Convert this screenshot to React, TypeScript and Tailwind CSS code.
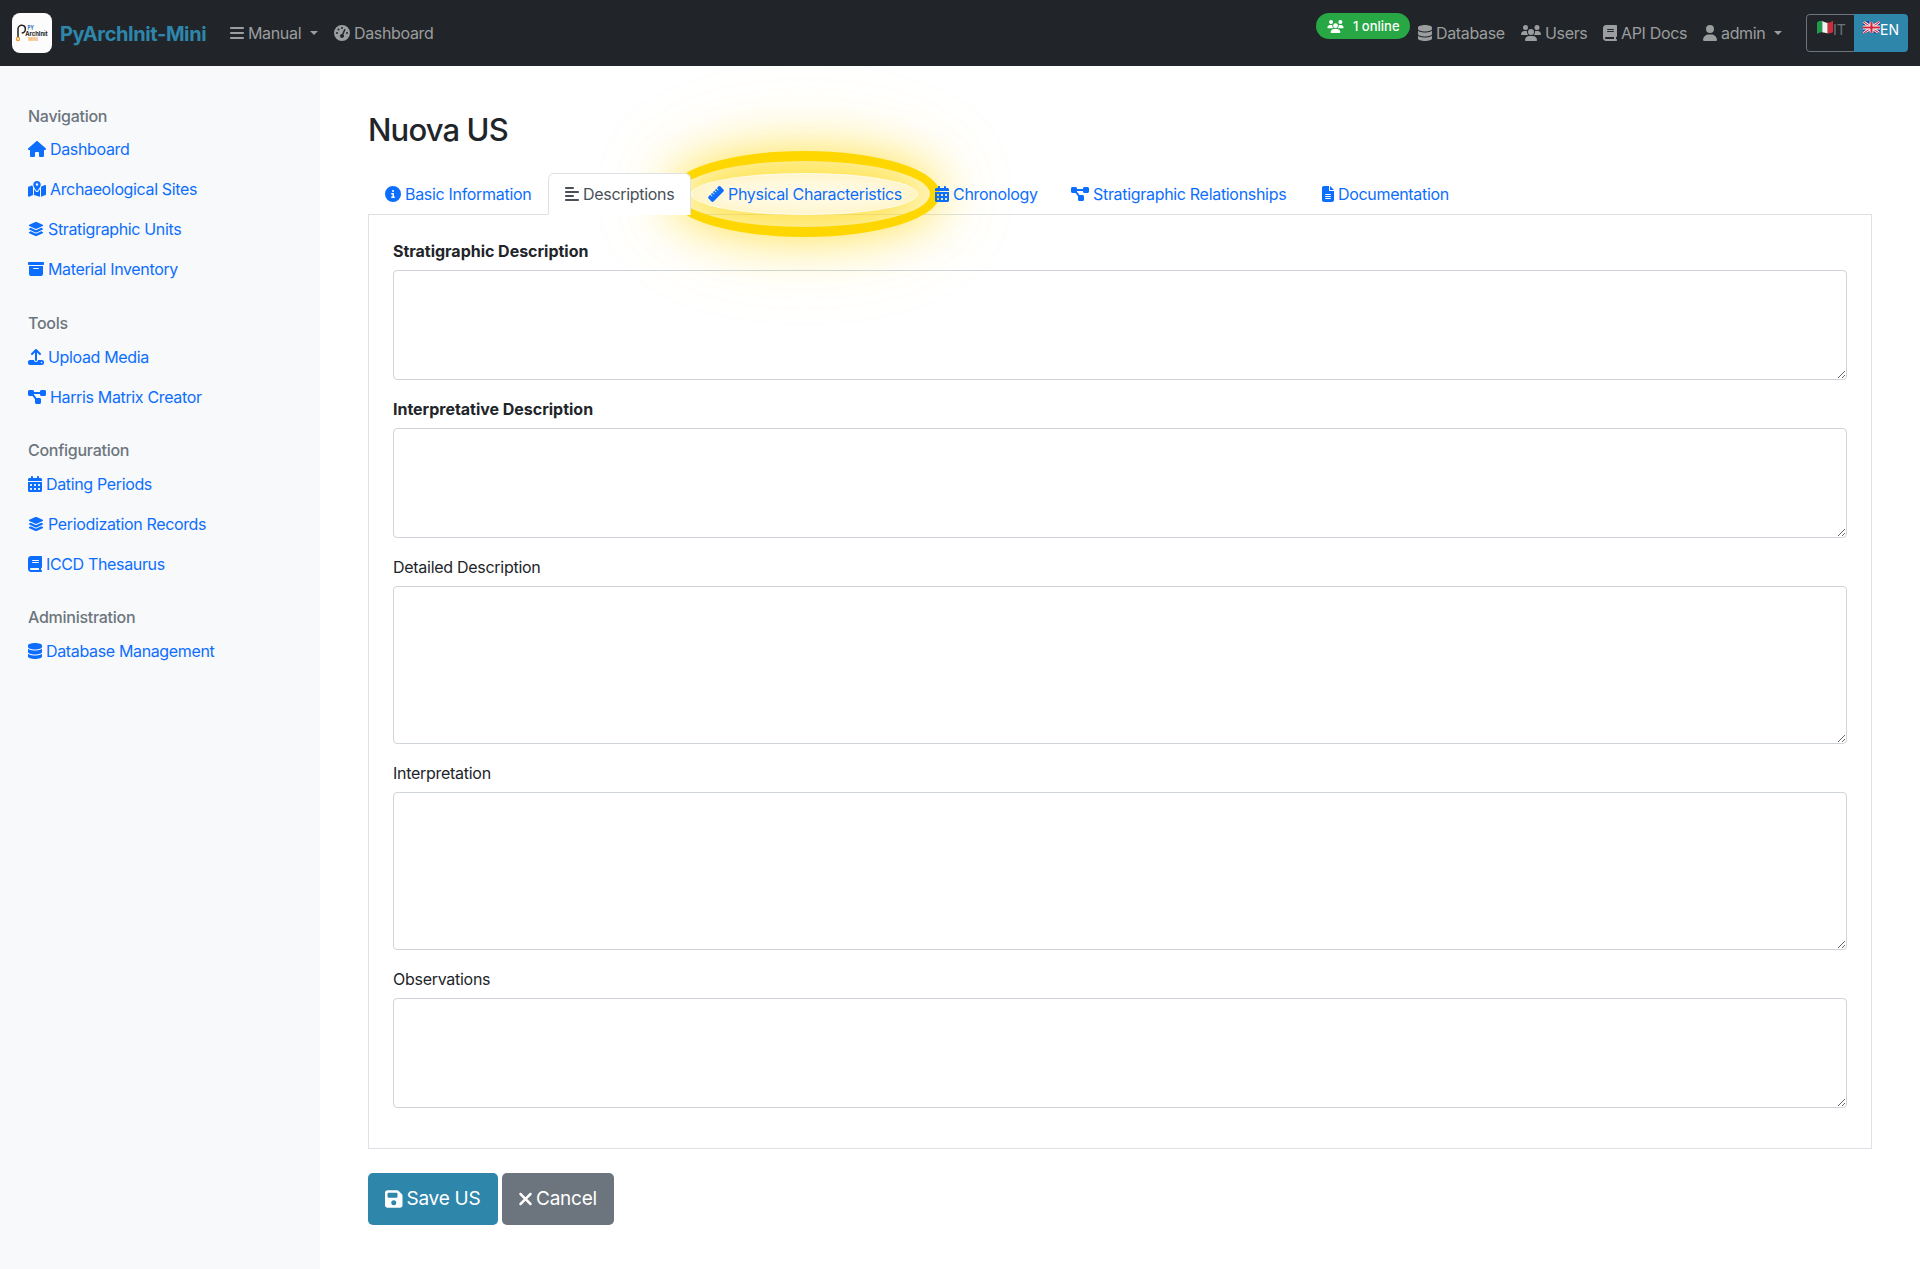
import React from "react";
import {
  FaAlignLeft,
  FaBars,
  FaBook,
  FaBoxArchive,
  FaCalendarDays,
  FaCircleInfo,
  FaDatabase,
  FaDiagramProject,
  FaFileLines,
  FaFloppyDisk,
  FaGaugeHigh,
  FaHouse,
  FaLayerGroup,
  FaMapLocationDot,
  FaRuler,
  FaUpload,
  FaUser,
  FaUsers,
  FaXmark,
} from "react-icons/fa6";

type Icon = React.ComponentType<{ className?: string }>;
type Link = { label: string; icon: Icon; size: string };

const W20 = "w-5 h-4";
const W18 = "w-[18px] h-4";
const W16 = "w-4 h-4";
const W14 = "w-3.5 h-4";
const W12 = "w-3 h-4";

const groups: { title: string; links: Link[] }[] = [
  {
    title: "Navigation",
    links: [
      { label: "Dashboard", icon: FaHouse, size: W18 },
      { label: "Archaeological Sites", icon: FaMapLocationDot, size: W18 },
      { label: "Stratigraphic Units", icon: FaLayerGroup, size: W16 },
      { label: "Material Inventory", icon: FaBoxArchive, size: W16 },
    ],
  },
  {
    title: "Tools",
    links: [
      { label: "Upload Media", icon: FaUpload, size: W16 },
      { label: "Harris Matrix Creator", icon: FaDiagramProject, size: W18 },
    ],
  },
  {
    title: "Configuration",
    links: [
      { label: "Dating Periods", icon: FaCalendarDays, size: W14 },
      { label: "Periodization Records", icon: FaLayerGroup, size: W16 },
      { label: "ICCD Thesaurus", icon: FaBook, size: W14 },
    ],
  },
  {
    title: "Administration",
    links: [{ label: "Database Management", icon: FaDatabase, size: W14 }],
  },
];

type Tab = Link & { width: string; state?: "active" | "highlight" };

const tabs: Tab[] = [
  { label: "Basic Information", icon: FaCircleInfo, size: W16, width: "w-[180px]" },
  { label: "Descriptions", icon: FaAlignLeft, size: W14, width: "w-[143px]", state: "active" },
  { label: "Physical Characteristics", icon: FaRuler, size: W16, width: "w-[227px]", state: "highlight" },
  { label: "Chronology", icon: FaCalendarDays, size: W14, width: "w-[136px]" },
  { label: "Stratigraphic Relationships", icon: FaDiagramProject, size: W18, width: "w-[251px]" },
  { label: "Documentation", icon: FaFileLines, size: W12, width: "w-[161px]" },
];

const fields = [
  { label: "Stratigraphic Description", bold: true, height: "h-[110px]" },
  { label: "Interpretative Description", bold: true, height: "h-[110px]" },
  { label: "Detailed Description", bold: false, height: "h-[158px]" },
  { label: "Interpretation", bold: false, height: "h-[158px]" },
  { label: "Observations", bold: false, height: "h-[110px]" },
];

function Logo() {
  return (
    <svg viewBox="0 0 40 40" className="h-10 w-10 shrink-0 rounded-lg bg-[#fcfcfc]">
      <path d="M6 24.300V15.800a3.700 3.900 0 1 1 3.700 4.300" fill="none" stroke="#222" strokeWidth="1.500" />
      <circle cx="6" cy="26" r="1.600" fill="#fff" stroke="#f0962e" strokeWidth="1.200" />
      <text x="15.600" y="17" fontSize="5.600" fontWeight="700" fill="#2f6fb5" textLength="6.200" lengthAdjust="spacingAndGlyphs" letterSpacing="0" fontFamily="Inter, sans-serif">PY</text>
      <text x="13.200" y="23.100" fontSize="5.800" fontWeight="700" fill="#222" textLength="22.500" lengthAdjust="spacingAndGlyphs" letterSpacing="0" fontFamily="Inter, sans-serif">ArchInit</text>
      <text x="16.200" y="28" fontSize="4.400" fontWeight="600" fill="#f5a04a" textLength="10" lengthAdjust="spacingAndGlyphs" letterSpacing="0" fontFamily="Inter, sans-serif">MINI</text>
    </svg>
  );
}

const wave = "M1 3.2C4 1.2 6 2 9 3S14 3.6 17 1.8V12.2C14 14 12 13.6 9 12.8S4 12 1 14Z";

function FlagIT() {
  return (
    <svg viewBox="1 1 16 13" preserveAspectRatio="none" className="h-[14px] w-4">
      <clipPath id="flag-it"><path d={wave} /></clipPath>
      <g clipPath="url(#flag-it)">
        <path d="M0 0h6.3v16H0z" fill="#1f9a4c" />
        <path d="M6.3 0h5.4v16H6.3z" fill="#f1f1f1" />
        <path d="M11.700 0H18v16h-6.300z" fill="#cf2c3b" />
      </g>
    </svg>
  );
}

function FlagGB() {
  return (
    <svg viewBox="1 1 16 13" preserveAspectRatio="none" className="h-[14px] w-[17px]">
      <clipPath id="flag-gb"><path d={wave} /></clipPath>
      <g clipPath="url(#flag-gb)">
        <path d="M0 0h18v16H0z" fill="#1d3f8f" />
        <path d="M0 1.500 18 14.500M18 1.500 0 14.500" stroke="#fff" strokeWidth="2.600" />
        <path d="M0 1.500 18 14.500M18 1.500 0 14.500" stroke="#d3243a" strokeWidth="1" />
        <path d="M9 0v16M0 8h18" stroke="#fff" strokeWidth="3.600" />
        <path d="M9 0v16M0 8h18" stroke="#d3243a" strokeWidth="2" />
      </g>
    </svg>
  );
}

function Caret() {
  return <span className="ml-[5px] border-x-[4.800px] border-t-[4.800px] border-x-transparent border-t-current" />;
}

function NavItem({ icon: I, size, label, width, caret }: Link & { width: string; caret?: boolean }) {
  return (
    <a className={`flex shrink-0 items-center gap-1 tracking-[-0.34px] text-[#9b9d9e] ${width}`}>
      <I className={`shrink-0 ${size}`} />
      <span className="whitespace-nowrap">{label}</span>
      {caret && <Caret />}
    </a>
  );
}

function Navbar() {
  return (
    <header className="flex h-[66px] items-center bg-[#212529] px-3">
      <Logo />
      <span className="ml-2 w-[170px] pt-px text-xl font-bold tracking-[-0.4px] text-[#2e86ab]">PyArchInit-Mini</span>
      <NavItem icon={FaBars} size={W14} label="Manual" width="w-[104px]" caret />
      <NavItem icon={FaGaugeHigh} size={W16} label="Dashboard" width="w-[110px]" />
      <div className="ml-auto flex items-center">
        <span className="mr-2 mb-3.5 flex h-[26px] w-[94px] items-center rounded-full bg-[#28a745] pt-px pl-[11px] text-[13px] font-medium text-white">
          <FaUsers className="mr-[9px] h-[13px] w-[17px]" />
          <span className="whitespace-nowrap">1 online</span>
        </span>
        <NavItem icon={FaDatabase} size={W14} label="Database" width="w-[103px]" />
        <NavItem icon={FaUsers} size={W20} label="Users" width="w-[82px]" />
        <NavItem icon={FaBook} size={W14} label="API Docs" width="w-[100px]" />
        <NavItem icon={FaUser} size={W14} label="admin" width="w-[103px]" caret />
        <div className="flex h-[38px] w-[102px] overflow-hidden rounded text-sm leading-[21px]">
          <span className="flex w-12 items-start rounded-l border border-r-0 border-[#6c757d] pt-[5px] pl-2.5 text-[#6c757d]">
            <FlagIT />
            <span className="-mt-px">IT</span>
          </span>
          <span className="flex flex-1 items-start bg-[#2e86ab] pt-1.5 pl-[9px] text-white">
            <FlagGB />
            <span className="-mt-px">EN</span>
          </span>
        </div>
      </div>
    </header>
  );
}

function Sidebar() {
  return (
    <aside className="w-80 shrink-0 bg-[#f8f9fb] pt-[17px] pl-7">
      {groups.map((g, i) => (
        <section key={g.title} className={i ? "pt-6" : "pt-6 pb-px"}>
          <h6 className={`text-base leading-[19px] font-medium tracking-[-0.27px] text-[#6c757d] ${i ? "mb-1" : "mb-[3px]"}`}>
            {g.title}
          </h6>
          {g.links.map(({ label, icon: I, size }) => (
            <a key={label} className="flex h-10 items-center gap-1 tracking-[-0.35px] text-[#0d6efd]">
              <I className={`shrink-0 ${size}`} />
              {label}
            </a>
          ))}
        </section>
      ))}
    </aside>
  );
}

const tabStyle = {
  plain: "border-transparent text-[#0d6efd]",
  active: "z-10 rounded-t-md border-[#dee2e6] border-b-white bg-white text-[#495057]",
  highlight:
    "rounded-[50%] border-[#fffbe8] bg-[#fffae6] text-[#0d6efd] outline-[10px] outline-offset-[12px] outline-[#ffd700] shadow-[0_0_50px_20px_rgba(255,215,0,0.72),0_0_90px_35px_rgba(255,215,0,0.1),inset_0_0_20px_rgba(255,215,0,0.22)]",
};

function TabBar() {
  return (
    <nav className="flex h-[42px] border-b border-[#dee2e6]">
      {tabs.map(({ label, icon: I, size, width, state }) => (
        <a
          key={label}
          className={`relative flex h-[42px] shrink-0 items-center gap-1 border pl-4 tracking-[-0.31px] whitespace-nowrap ${width} ${tabStyle[state ?? "plain"]}`}
        >
          <I className={`shrink-0 ${size}`} />
          {label}
        </a>
      ))}
    </nav>
  );
}

export default function App() {
  return (
    <div className="flex min-h-[1269px] flex-col bg-white font-[Inter,sans-serif] text-base text-[#212529]">
      <Navbar />
      <div className="flex flex-1">
        <Sidebar />
        <main className="flex-1 pt-[45px] pr-12 pl-12">
          <h2 className="mb-6 text-[31px] leading-[38px] font-medium tracking-[-0.85px]">Nuova US</h2>
          <TabBar />
          <form className="border border-t-0 border-[#dee2e6] px-6 pt-6 pb-10">
            {fields.map((f, i) => (
              <div key={f.label} className={i ? "mt-[17px]" : ""}>
                <label className={`mb-[7px] block leading-6 ${f.bold ? "font-bold tracking-[-0.02px]" : "tracking-[-0.28px]"}`}>
                  {f.label}
                </label>
                <textarea className={`block w-full resize-y rounded border border-[#ced4da] bg-white ${f.height}`} />
              </div>
            ))}
          </form>
          <div className="mt-6 flex gap-1 text-[19px] tracking-[-0.25px] text-white">
            <button className="flex h-[52px] w-[130px] items-center gap-1 rounded-[5px] bg-[#2e86ab] pl-[17px]">
              <FaFloppyDisk className="h-5 w-[17.500px]" />
              Save US
            </button>
            <button className="flex h-[52px] w-28 items-center gap-[3px] rounded-[5px] bg-[#6c757d] pl-4">
              <FaXmark className="h-5 w-[15px]" />
              Cancel
            </button>
          </div>
        </main>
      </div>
    </div>
  );
}
